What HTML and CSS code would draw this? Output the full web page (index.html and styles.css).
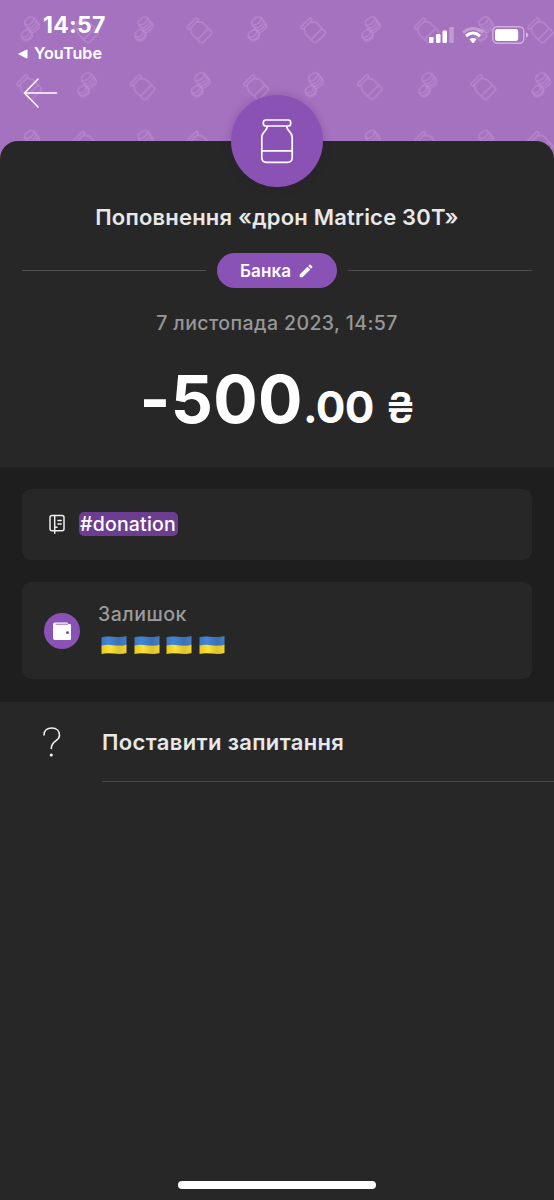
FILE: index.html
```html
<!DOCTYPE html>
<html lang="uk">
<head>
<meta charset="utf-8">
<title>Банка</title>
<link rel="stylesheet" href="styles.css">
</head>
<body>
<main class="screen">
  <header class="header">
    <svg class="pattern" width="554" height="160" aria-hidden="true">
      <defs>
        <g id="jar" fill="none">
          <rect x="-13.7" y="-21" width="27.4" height="6" rx="2.6"/>
          <path d="M-9.800-15C-9.200-9.500-15.200-10-15.200-4V16.500Q-15.200 21.300 -10.500 21.300H10.500Q15.200 21.300 15.200 16.500V-4C15.200-10 9.200-9.500 9.800-15M-15.200 9.800H15.200"/>
        </g>
        <pattern id="tile" width="113.600" height="113.600" patternUnits="userSpaceOnUse">
          <g stroke="#bf8ed5" stroke-opacity=".72">
            <g transform="translate(85.700 30.300) rotate(-45) scale(.52)" stroke-width="2.700"><use href="#jar"/></g>
            <g transform="translate(28.800 87) rotate(-45) scale(.52)" stroke-width="2.700"><use href="#jar"/></g>
            <g id="coins" transform="translate(30.300 28.800)" fill="none" stroke-width="1.300">
              <g transform="translate(1.500 -4.500) rotate(-38)">
                <rect x="-5.800" y="-7" width="11.600" height="14.500" rx="3.800"/>
                <path d="M-5.800-3.500Q0 1 5.800-3.500M-5.800 0Q0 4.500 5.800 0M-5.800 3Q0 7.500 5.800 3"/>
              </g>
              <g transform="translate(-3.500 6.500) rotate(-38)">
                <rect x="-5.300" y="-5" width="10.600" height="10" rx="3.800"/>
                <path d="M-5.300-1.500Q0 3 5.300-1.500M-5.300 1.500Q0 6 5.300 1.500"/>
              </g>
            </g>
            <use href="#coins" transform="translate(56.800 55.800)"/>
          </g>
        </pattern>
      </defs>
      <rect width="554" height="160" fill="url(#tile)"/>
    </svg>
    <div class="status">
      <div class="clock">
        <div class="time">14:57</div>
        <div class="return"><svg width="11" height="10" viewBox="0 0 11 10"><path d="M.8 5L9.800.6Q10.500.5 10.500 1.300V8.700Q10.500 9.500 9.800 9.400Z" fill="#fff"/></svg><span>YouTube</span></div>
      </div>
      <svg class="indicators" width="102" height="22" viewBox="0 0 102 22" fill="#fff">
        <rect x="1" y="13" width="4.500" height="6" rx="1.200"/><rect x="8" y="10" width="4.500" height="9" rx="1.200"/><rect x="14.500" y="6.500" width="4.500" height="12.500" rx="1.200"/><rect x="21.300" y="3" width="4.500" height="16" rx="1.200" opacity=".3"/>
        <g fill="none" stroke="#fff" stroke-width="3"><path d="M35 8.500Q45 .5 55 8.500" opacity=".3"/><path d="M38 12Q45 6 52 12"/></g>
        <path d="M41.500 15.200Q45 12.600 48.500 15.200L46 18.400Q45 19.600 44 18.400Z"/>
        <rect x="64.800" y="2.800" width="31" height="16.400" rx="4.500" fill="none" stroke="#fff" stroke-opacity=".45" stroke-width="1.400"/><rect x="67" y="5" width="23.200" height="12" rx="2.500"/><path d="M98 8.500Q100.300 9 100.300 11T98 13.500Z" opacity=".5"/>
      </svg>
    </div>
    <svg class="back" width="36" height="34" viewBox="0 0 36 34" fill="none" stroke="#fff" stroke-width="1.500" stroke-linecap="round" stroke-linejoin="round"><path d="M16 3L2.500 17L16 31M2.500 17H34.500"/></svg>
  </header>

  <section class="summary">
    <div class="avatar"><svg width="34" height="46" viewBox="-17 -23 34 46" stroke="#fff" stroke-width="1.700"><use href="#jar"/></svg></div>
    <h1 class="title">Поповнення «дрон Matrice 30T»</h1>
    <div class="category">
      <span class="rule"></span>
      <div class="chip"><span>Банка</span><svg width="14" height="14" viewBox="0 0 14 14" fill="#fff"><path d="M.7 10.500L8.500 2.700L11.300 5.500L3.500 13.300H.7ZM9.300 1.900L10.500.7Q11 .3 11.500.7L13.300 2.500Q13.700 3 13.300 3.500L12.100 4.700Z"/></svg></div>
      <span class="rule"></span>
    </div>
    <div class="date">7 листопада 2023, 14:57</div>
    <div class="amount"><span class="whole">-500</span><span class="cents">.00</span><span class="currency">₴</span></div>
  </section>

  <section class="details">
    <div class="card note">
      <svg width="18" height="22" viewBox="0 0 18 22" fill="none" stroke="#eee" stroke-width="1.500" stroke-linecap="round"><rect x="2" y="2.500" width="14" height="15.300" rx="2"/><path d="M6.700 2.500V20.300M10 7.500H13.200M10 11H13.200M6.700 14.300H9"/></svg>
      <span class="tag">#donation</span>
    </div>
    <div class="card balance">
      <div class="wallet"><svg width="20" height="20" viewBox="0 0 20 20"><path d="M3 1.500H15Q16.300 1.500 16.300 3H18Q19 3 19 4.500V17.500Q19 19 17.500 19H3Q1 19 1 17V3.500Q1 1.500 3 1.500Z" fill="#fff"/><path d="M3.500 3.200H16" stroke="#8c53b5" stroke-width=".9"/><circle cx="15.500" cy="11.700" r="1.400" fill="#74419b"/></svg></div>
      <div class="remainder">
        <div class="label">Залишок</div>
        <div class="flags" role="img" aria-label="🇺🇦🇺🇦🇺🇦🇺🇦">
          <svg viewBox="0 0 26 20"><defs><linearGradient id="blue"><stop stop-color="#3978c3"/><stop offset=".3" stop-color="#4286d4"/><stop offset=".7" stop-color="#3b70b4"/><stop offset="1" stop-color="#467fc0"/></linearGradient><linearGradient id="yellow"><stop stop-color="#e5c91f"/><stop offset=".35" stop-color="#fae037"/><stop offset=".7" stop-color="#dfc32b"/><stop offset="1" stop-color="#f2d52d"/></linearGradient><g id="flag"><path d="M.5 2.200C8-.2 16 3.800 25.500 1V10C17 12.500 9 8.500.5 10.800Z" fill="url(#blue)"/><path d="M.5 10.500C9 8.200 17 12.300 25.500 9.700V18C17 20.500 9 16.700.5 19Z" fill="url(#yellow)"/></g></defs><use href="#flag"/></svg>
          <svg viewBox="0 0 26 20"><use href="#flag"/></svg>
          <svg viewBox="0 0 26 20"><use href="#flag"/></svg>
          <svg viewBox="0 0 26 20"><use href="#flag"/></svg>
        </div>
      </div>
    </div>
  </section>

  <section class="support">
    <svg width="20" height="32" viewBox="0 0 20 32" fill="none" stroke="#eee" stroke-width="1.600" stroke-linecap="round"><path d="M2 9C2 4.500 5 2 9.800 2S17.500 5 17.500 9.200C17.500 15.500 9.300 14.500 9.300 22.500"/><circle cx="9.300" cy="29" r="1.600" fill="#eee" stroke="none"/></svg>
    <div class="question">Поставити запитання</div>
  </section>
  <footer class="home"><span></span></footer>
</main>
</body>
</html>
```

FILE: styles.css
```css
* { box-sizing: border-box; }
body { margin: 0; background: #272727; }
svg { display: block; flex: none; }
.screen {
  width: 554px; height: 1200px; overflow: hidden;
  display: flex; flex-direction: column;
  background: #272727; color: #e8e8e8;
  font-family: Inter, "Liberation Sans", sans-serif;
}
.header { position: relative; isolation: isolate; height: 141px; flex: none; background: #a572bf; }
.pattern { position: absolute; z-index: -1; inset: 0; background: #a572bf; }
.status { display: flex; justify-content: space-between; padding: 11px 24px 0 17px; height: 76px; color: #fff; }
.time { margin-left: 26px; font-size: 23px; line-height: 29px; font-weight: 700; letter-spacing: .3px; }
.return { display: flex; align-items: center; gap: 6px; margin-top: 3px; font-size: 16.2px; line-height: 21px; font-weight: 600; }
.indicators { margin-top: 13px; }
.back { margin-left: 22px; }
.summary {
  position: relative; height: 326px; flex: none; display: flex; flex-direction: column; align-items: center;
  background: #272727; border-radius: 18px 18px 0 0;
}
.avatar {
  width: 92px; height: 92px; margin-top: -46px; flex: none; display: grid; place-items: center;
  border-radius: 50%; background: #8a52b5; box-shadow: 0 0 8px rgba(60, 20, 90, .25);
}
.title { margin: 15px 0 0; font-size: 22px; line-height: 30px; font-weight: 600; letter-spacing: .2px; white-space: nowrap; }
.category { align-self: stretch; display: flex; align-items: center; gap: 11px; margin: 21px 22px 0; }
.rule { flex: 1; height: 1px; background: #505050; }
.chip { width: 120px; height: 35px; padding-right: 1px; display: flex; align-items: center; justify-content: center; gap: 8px; border-radius: 18px; background: #8a52b5; color: #fff; font-size: 17px; font-weight: 600; letter-spacing: .1px; }
.date { margin-top: 21px; color: #979797; font-size: 19.5px; line-height: 28px; font-weight: 500; letter-spacing: .4px; white-space: nowrap; }
.amount { display: flex; align-items: baseline; margin: 20px 0 0 1px; height: 84px; line-height: 84px; color: #fff; font-weight: 700; white-space: nowrap; font-feature-settings: "calt" 0; }
.whole { font-size: 66px; letter-spacing: .3px; }
.cents { font-size: 44px; font-weight: 700; letter-spacing: -.6px; }
.currency { margin-left: 12px; font-size: 42px; font-weight: 600; }
.details { height: 235px; flex: none; padding: 22px 22px 23px; display: flex; flex-direction: column; gap: 22px; background: #1e1e1e; }
.card { display: flex; align-items: center; border-radius: 9px; background: #272727; }
.note { height: 71px; padding: 0 0 2px 26px; gap: 13px; }
.note svg { margin-top: 1px; }
.tag { height: 24px; padding: 0 2px 0 1px; border-radius: 5px; background: #6c3d91; color: #fff; font-size: 19.5px; line-height: 24px; font-weight: 500; letter-spacing: .2px; }
.balance { height: 97px; padding-left: 22px; gap: 18px; }
.wallet { width: 36px; height: 36px; display: grid; place-items: center; border-radius: 50%; background: #8a52b5; }
.remainder { padding-bottom: 7px; }
.label { color: #9b9b9b; font-size: 19.5px; line-height: 28px; font-weight: 500; letter-spacing: .5px; }
.flags { display: flex; gap: 6.500px; padding: 7px 0 0 3px; }
.flags svg { width: 26px; height: 20px; }
.support { height: 80px; flex: none; display: flex; padding-left: 42px; gap: 40px; }
.support svg { margin-top: 24px; }
.question { flex: 1; border-bottom: 1px solid #484848; font-size: 22px; line-height: 80px; font-weight: 600; letter-spacing: .35px; white-space: nowrap; }
.home { margin-top: auto; height: 19px; display: flex; justify-content: center; }
.home span { width: 198px; height: 8px; border-radius: 4px; background: #fff; }
```
